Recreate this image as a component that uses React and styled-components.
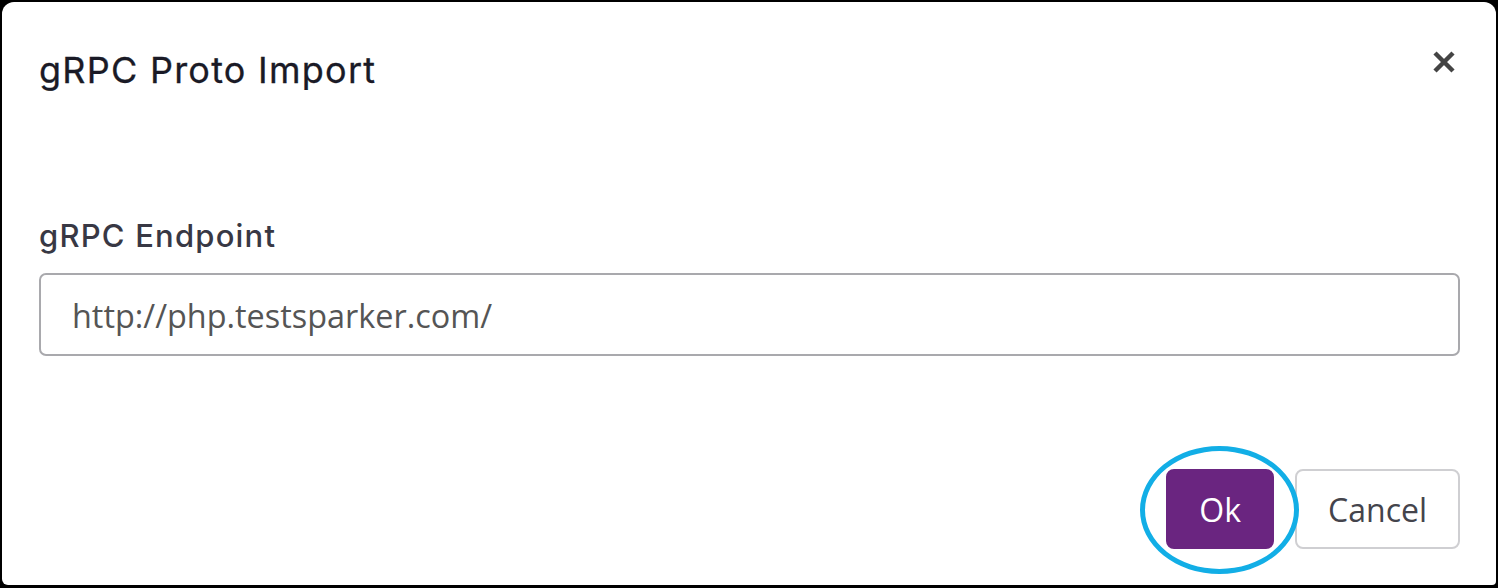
import React, { useState } from 'react'
import styled, { createGlobalStyle } from 'styled-components'

const GlobalStyle = createGlobalStyle`
    html, body {
        margin: 0;
        padding: 0;
        background-color: #000;
    }
    * {
        box-sizing: border-box;
    }
`;

const Frame = styled.div`
    width: 1498px;
    height: 588px;
    padding: 2px 2px 3px 2px;
`;

const Dialog = styled.div`
    display: flex;
    flex-direction: column;
    height: 100%;
    background-color: #fff;
    border-radius: 12px 12px 4px 6px;
    padding: 0 36px 0 37px;
`;

const Header = styled.div`
    display: flex;
    justify-content: space-between;
    align-items: flex-start;
    padding-top: 44px;
`;

const Title = styled.h2`
    margin: 0;
    font-family: Inter, "Noto Sans", sans-serif;
    font-weight: 400;
    font-size: 36px;
    line-height: 48px;
    letter-spacing: 1.25px;
    color: #1a1a26;
    -webkit-text-stroke: 0.3px #1a1a26;
`;

const CloseButton = styled.button`
    display: flex;
    align-items: center;
    justify-content: center;
    width: 36px;
    height: 36px;
    margin-top: -2px;
    margin-right: -2px;
    padding: 0;
    border: none;
    background: none;
    cursor: pointer;
`;

const Body = styled.div`
    display: flex;
    flex-direction: column;
    padding-top: 122px;
`;

const Label = styled.label`
    font-family: Inter, "Noto Sans", sans-serif;
    font-weight: 500;
    font-size: 31px;
    line-height: 40px;
    letter-spacing: 1.2px;
    color: #383844;
    margin-bottom: 17px;
`;

const Input = styled.input`
    width: 100%;
    height: 83px;
    padding: 0 31px;
    border: 2px solid #a9a9ad;
    border-radius: 7px;
    font-family: "Open Sans", sans-serif;
    font-size: 32.4px;
    color: #555;
    outline: none;
`;

const Footer = styled.div`
    display: flex;
    justify-content: flex-end;
    gap: 21px;
    margin-top: auto;
    padding-bottom: 36px;
`;

const Highlight = styled.div`
    position: relative;
    display: flex;
    &::after {
        content: '';
        position: absolute;
        left: -26px;
        top: -23px;
        right: -25px;
        bottom: -25px;
        border: 5px solid #12aee6;
        border-radius: 50%;
        pointer-events: none;
    }
`;

const Button = styled.button`
    height: 80px;
    padding: 0 31px;
    border-radius: 8px;
    font-family: "Open Sans", sans-serif;
    font-size: 32px;
    cursor: pointer;
    border: 2px solid ${props => props.primary ? '#6a2580' : '#cfcfd2'};
    background-color: ${props => props.primary ? '#6a2580' : '#fff'};
    color: ${props => props.primary ? '#fff' : '#44444c'};
`;

function App() {
    const [endpoint, setEndpoint] = useState('http://php.testsparker.com/');

    return (
        <>
            <GlobalStyle />
            <Frame>
                <Dialog>
                    <Header>
                        <Title>gRPC Proto Import</Title>
                        <CloseButton aria-label='Close'>
                            <svg width='24' height='24' viewBox='0 0 24 24'>
                                <path d='M3 3 L21 21 M21 3 L3 21' stroke='#444' strokeWidth='4.5' strokeLinecap='butt' />
                            </svg>
                        </CloseButton>
                    </Header>
                    <Body>
                        <Label>gRPC Endpoint</Label>
                        <Input value={endpoint} onChange={(e) => {setEndpoint(e.target.value)}} />
                    </Body>
                    <Footer>
                        <Highlight>
                            <Button primary>Ok</Button>
                        </Highlight>
                        <Button>Cancel</Button>
                    </Footer>
                </Dialog>
            </Frame>
        </>
    )
}

export default App
